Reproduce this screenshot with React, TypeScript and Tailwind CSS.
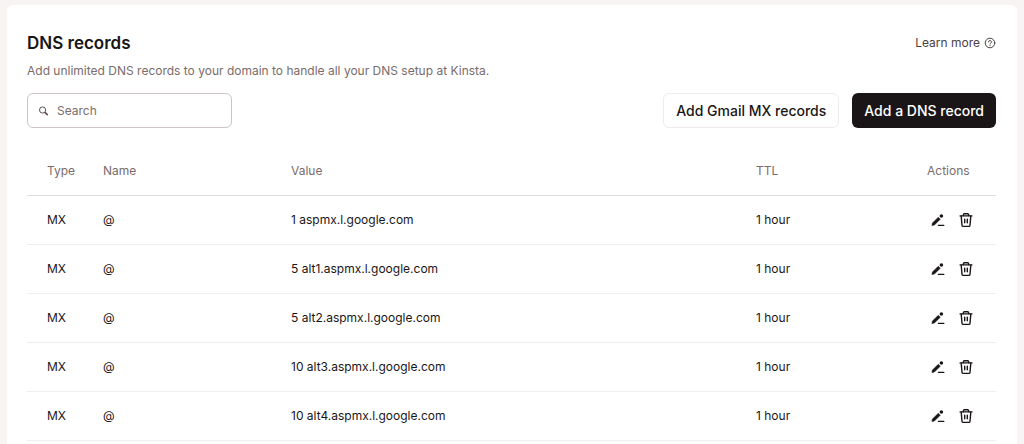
import React, { useState } from 'react'

type DnsRecord = {
    type: string
    name: string
    value: string
    ttl: string
}

const records: DnsRecord[] = [
    { type: 'MX', name: '@', value: '1 aspmx.l.google.com', ttl: '1 hour' },
    { type: 'MX', name: '@', value: '5 alt1.aspmx.l.google.com', ttl: '1 hour' },
    { type: 'MX', name: '@', value: '5 alt2.aspmx.l.google.com', ttl: '1 hour' },
    { type: 'MX', name: '@', value: '10 alt3.aspmx.l.google.com', ttl: '1 hour' },
    { type: 'MX', name: '@', value: '10 alt4.aspmx.l.google.com', ttl: '1 hour' },
]

function SearchIcon() {
    return (
        <svg className='size-3 shrink-0 text-[#5c5050]' viewBox='0 0 12 12' fill='none' stroke='currentColor' aria-hidden='true'>
            <circle cx='4.6' cy='5' r='3.1' strokeWidth='1' />
            <path d='M7.2 7.6L9.2 9.6' strokeWidth='1.6' strokeLinecap='round' />
        </svg>
    )
}

function HelpIcon() {
    return (
        <svg className='size-3' viewBox='0 0 12 12' fill='none' stroke='currentColor' strokeLinecap='round' aria-hidden='true'>
            <circle cx='6' cy='6' r='4.8' strokeWidth='1' />
            <path d='M4.6 4.9a1.4 1.4 0 1 1 2.1 1.2c-.5.3-.7.5-.7.9' strokeWidth='1' />
            <circle cx='6' cy='8.6' r='.6' fill='currentColor' stroke='none' />
        </svg>
    )
}

function EditIcon() {
    return (
        <svg className='size-4' viewBox='0 0 16 16' aria-hidden='true'>
            <path d='M1.9 13.6l.5-2.5 5.9-5.9 2 2-5.9 5.9z' fill='currentColor' stroke='currentColor' strokeWidth='.5' strokeLinejoin='round' />
            <circle cx='11.4' cy='4' r='1.8' fill='currentColor' />
            <path d='M8.4 13.4h5.4' stroke='currentColor' strokeWidth='1.3' strokeLinecap='round' />
        </svg>
    )
}

function TrashIcon() {
    return (
        <svg className='size-4' viewBox='0 0 16 16' fill='none' stroke='currentColor' strokeWidth='1.4' strokeLinecap='round' strokeLinejoin='round' aria-hidden='true'>
            <path d='M2.1 3.9h11.8' />
            <path d='M5.1 3.7l.5-1.4q.2-.6.8-.6h3.2q.6 0 .8.6l.5 1.4' />
            <path d='M3.2 4.1l.8 9.1q.1 1.2 1.3 1.2h5.4q1.2 0 1.3-1.2l.8-9.1' />
            <path d='M6.7 7.2v3.6M9.3 7.2v3.6' />
        </svg>
    )
}

export default function App() {
    const [search, setSearch] = useState('')

    const rows = records.filter((record) => record.value.includes(search.trim()))

    return (
        <div className="flex min-h-screen flex-col bg-[#f8f4f3] px-[7px] pt-[5px] font-['Inter',sans-serif] text-[#1a1617]">
            <main className='flex-1 rounded-t-md bg-white pt-6 pr-[21px] pl-5'>
                <div className='flex items-center justify-between'>
                    <h1 className='text-[17px] leading-7 font-semibold'>DNS records</h1>
                    <a href='#' className='flex items-center gap-1 text-xs text-[#4b4142]'>
                        Learn more
                        <HelpIcon />
                    </a>
                </div>
                <p className='mt-1 text-xs leading-5 text-[#7a6c6b]'>
                    Add unlimited DNS records to your domain to handle all your DNS setup at Kinsta.
                </p>

                <div className='mt-3 flex items-center justify-between'>
                    <label className='flex h-[35px] w-[205px] items-center gap-[7px] rounded-md border border-[#cdc5c4] px-2.5'>
                        <SearchIcon />
                        <input
                            type='text'
                            aria-label='Search'
                            placeholder='Search'
                            value={search}
                            onChange={(e) => setSearch(e.target.value)}
                            className='w-full min-w-0 text-xs outline-none placeholder:text-[#7a6c6b]'
                        />
                    </label>
                    <div className='flex gap-[13px]'>
                        <button type='button' className='h-[35px] rounded-md border border-[#f1ebea] px-3 text-sm font-medium'>
                            Add Gmail MX records
                        </button>
                        <button type='button' className='h-[35px] rounded-md bg-[#1a1617] px-3 text-sm font-medium text-white'>
                            Add a DNS record
                        </button>
                    </div>
                </div>

                <table className='mt-5 w-full table-fixed border-collapse text-left text-xs'>
                    <thead>
                        <tr className='h-[47px] border-b border-[#e3dddc] text-[#7a6c6b]'>
                            <th className='w-[76px] pl-5 font-normal'>Type</th>
                            <th className='w-[188px] font-normal'>Name</th>
                            <th className='font-normal'>Value</th>
                            <th className='w-[171px] font-normal'>TTL</th>
                            <th className='w-[69px] font-normal'>Actions</th>
                        </tr>
                    </thead>
                    <tbody>
                        {rows.map((record) => (
                            <tr key={record.value} className='h-[49px] border-b border-[#f1edec]'>
                                <td className='pl-5'>{record.type}</td>
                                <td>{record.name}</td>
                                <td>{record.value}</td>
                                <td>{record.ttl}</td>
                                <td>
                                    <div className='flex gap-3 pl-[3px]'>
                                        <button type='button' aria-label='Edit record'>
                                            <EditIcon />
                                        </button>
                                        <button type='button' aria-label='Delete record'>
                                            <TrashIcon />
                                        </button>
                                    </div>
                                </td>
                            </tr>
                        ))}
                    </tbody>
                </table>
            </main>
        </div>
    )
}
